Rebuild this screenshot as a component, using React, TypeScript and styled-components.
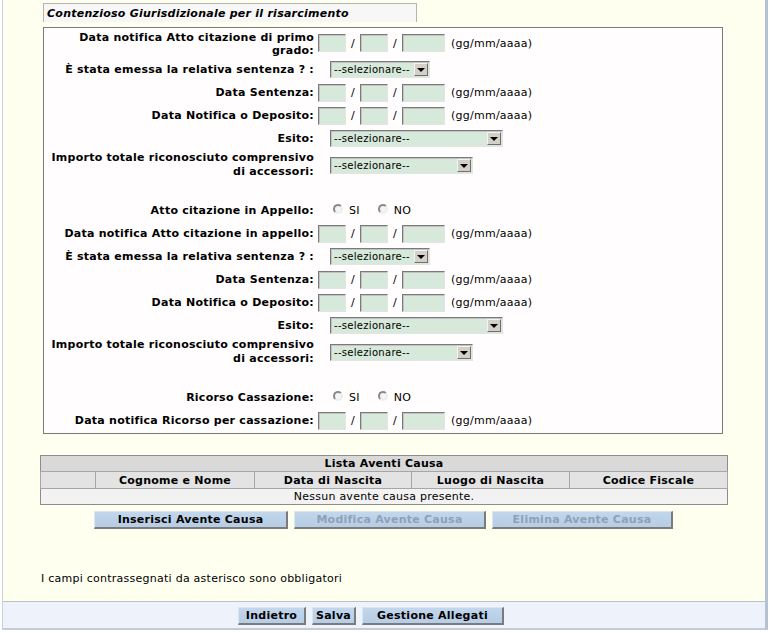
import React from 'react';
import styled, { createGlobalStyle } from 'styled-components';

const GlobalStyle = createGlobalStyle`
  html, body {
    margin: 0;
    padding: 0;
    background: #ffffff;
  }

  body {
    font-family: 'DejaVu Sans', Verdana, sans-serif;
    font-size: 11px;
    letter-spacing: 0.25px;
    color: #000;
  }
`;

const colors = {
  page: '#fffff0',
  box: '#fffdfd',
  field: '#d6e9da',
  button: '#b6cde5',
  bar: '#eef3fb'
};

const Page = styled.div`
  display: flex;
  flex-direction: column;
  margin-left: 2px;
  width: 762px;
  height: 628px;
  border-left: 1px solid #c9d3dd;
  border-right: 3px solid #b3c3d3;
  border-bottom: 2px solid #c3ccd5;
  background-color: ${colors.page};
`;

const Main = styled.div`
  flex: 1;
  padding-top: 3px;
`;

const Section = styled.div`
  margin-left: 40px;
  width: 680px;
`;

const Tab = styled.div`
  box-sizing: border-box;
  width: 374px;
  height: 19px;
  padding-left: 3px;
  border: 1px solid #b4b4b4;
  border-bottom: 0;
  background-color: #f7f7f7;
  font-weight: bold;
  font-style: italic;
  line-height: 19px;
`;

const Box = styled.div`
  box-sizing: border-box;
  margin-top: 5px;
  padding-bottom: 1px;
  border: 1px solid #7a7a7a;
  background-color: ${colors.box};
`;

const Row = styled.div<{ $blank?: boolean }>`
  display: grid;
  grid-template-columns: 270px 1fr;
  align-items: center;
  min-height: ${p => (p.$blank ? '19px' : '23px')};
`;

const Label = styled.div<{ $low?: boolean }>`
  padding: ${p => (p.$low ? '3px 0 1px 3px' : '1px 0 1px 3px')};
  text-align: right;
  font-weight: bold;
  line-height: ${p => (p.$low ? '13px' : '14px')};
`;

const Field = styled.div`
  display: flex;
  align-items: center;
  padding-left: 4px;
`;

const Input = styled.div<{ $w: number }>`
  box-sizing: border-box;
  width: ${p => p.$w}px;
  height: 18px;
  background-color: ${colors.field};
  border: 1px solid;
  border-color: #7a7a7a #e4e4e4 #e4e4e4 #7a7a7a;
  box-shadow: inset 1px 1px 0 #c2c2c2;
`;

const Slash = styled.span`
  width: 14px;
  text-align: center;
`;

const Hint = styled.span`
  margin-left: 6px;
`;

const Select = styled.div<{ $w: number }>`
  position: relative;
  box-sizing: border-box;
  width: ${p => p.$w}px;
  height: 17px;
  margin-left: 12px;
  padding-left: 3px;
  background-color: ${colors.field};
  border: 1px solid;
  border-color: #7a7a7a #e4e4e4 #e4e4e4 #7a7a7a;
  box-shadow: inset 1px 1px 0 #c2c2c2;
  font-size: 10px;
  letter-spacing: 0.3px;
  line-height: 15px;
`;

const Arrow = styled.span`
  position: absolute;
  top: 1px;
  right: 1px;
  box-sizing: border-box;
  width: 14px;
  height: 13px;
  background-color: #d4d0c8;
  border: 1px solid;
  border-color: #f4f4f4 #6e6e6e #6e6e6e #f4f4f4;

  &::after {
    content: '';
    position: absolute;
    left: 2px;
    top: 4px;
    border-left: 4px solid transparent;
    border-right: 4px solid transparent;
    border-top: 4px solid #000;
  }
`;

const Radio = styled.span<{ $first?: boolean }>`
  box-sizing: border-box;
  width: 10px;
  height: 10px;
  margin: -4px 6px 0 ${p => (p.$first ? '15px' : '18px')};
  border-radius: 50%;
  border: 2px solid;
  border-color: #8a8a8a #eeeeee #eeeeee #8a8a8a;
  background-color: #f4f4f4;
`;

const ListTable = styled.table`
  margin: 21px 0 0 37px;
  width: 687px;
  border-collapse: collapse;
  border: 1px solid #8c8c8c;
  table-layout: fixed;
`;

const Col = styled.col<{ $w: number }>`
  width: ${p => p.$w}px;
`;

const TitleCell = styled.th`
  height: 15px;
  padding: 0;
  background-color: #d9d9d9;
  border-bottom: 1px solid #a6a6a6;
  font-size: 11px;
  line-height: 15px;
`;

const HeadCell = styled.th`
  height: 16px;
  padding: 0;
  background-color: #e3e3e3;
  border: 1px solid #a6a6a6;
  font-size: 11px;
  line-height: 15px;
`;

const EmptyCell = styled.td`
  height: 15px;
  padding: 0;
  background-color: #f2f2f2;
  border-top: 1px solid #a6a6a6;
  text-align: center;
  line-height: 15px;
`;

const ButtonRow = styled.div<{ $start?: number }>`
  display: flex;
  gap: 6px;
  ${p => (p.$start ? `padding-left: ${p.$start}px;` : 'justify-content: center;')}
`;

const ListButtons = styled(ButtonRow)`
  margin: 6px 0 0 37px;
  width: 687px;
`;

const Button = styled.button<{ $w: number }>`
  box-sizing: border-box;
  width: ${p => p.$w}px;
  height: 18px;
  padding: 0;
  background: linear-gradient(#c2d6ec, ${colors.button});
  border: 1px solid #dbe5ef;
  border-right: 2px solid #7b7b7b;
  border-bottom: 2px solid #7b7b7b;
  font-family: 'DejaVu Sans', Verdana, sans-serif;
  font-size: 11px;
  font-weight: bold;
  letter-spacing: 0.25px;
  line-height: 14px;
  color: #000;

  &:disabled {
    color: #8fa1b5;
  }
`;

const Note = styled.p`
  margin: 43px 0 0 38px;
  line-height: 14px;
`;

const Bar = styled.div`
  height: 27px;
  padding-top: 5px;
  box-sizing: border-box;
  border-top: 1px solid #b9c1c9;
  background-color: ${colors.bar};
`;

const DateField = () => (
  <Field>
    <Input $w={28} />
    <Slash>/</Slash>
    <Input $w={28} />
    <Slash>/</Slash>
    <Input $w={43} />
    <Hint>(gg/mm/aaaa)</Hint>
  </Field>
);

const Choice = ({ w }: { w: number }) => (
  <Field>
    <Select $w={w}>
      --selezionare--
      <Arrow />
    </Select>
  </Field>
);

const YesNo = () => (
  <Field>
    <Radio $first />
    <span>SI</span>
    <Radio />
    <span>NO</span>
  </Field>
);

const Outcome = () => (
  <>
    <Row>
      <Label>È stata emessa la relativa sentenza ? :</Label>
      <Choice w={100} />
    </Row>
    <Row>
      <Label>Data Sentenza:</Label>
      <DateField />
    </Row>
    <Row>
      <Label>Data Notifica o Deposito:</Label>
      <DateField />
    </Row>
    <Row>
      <Label>Esito:</Label>
      <Choice w={173} />
    </Row>
    <Row>
      <Label>
        Importo totale riconosciuto comprensivo
        <br />
        di accessori:
      </Label>
      <Choice w={143} />
    </Row>
  </>
);

export default function App() {
  return (
    <>
      <GlobalStyle />
      <Page>
        <Main>
          <Section>
            <Tab>Contenzioso Giurisdizionale per il risarcimento</Tab>
            <Box>
              <Row>
                <Label $low>
                  Data notifica Atto citazione di primo
                  <br />
                  grado:
                </Label>
                <DateField />
              </Row>
              <Outcome />
              <Row $blank />
              <Row>
                <Label>Atto citazione in Appello:</Label>
                <YesNo />
              </Row>
              <Row>
                <Label>Data notifica Atto citazione in appello:</Label>
                <DateField />
              </Row>
              <Outcome />
              <Row $blank />
              <Row>
                <Label>Ricorso Cassazione:</Label>
                <YesNo />
              </Row>
              <Row>
                <Label>Data notifica Ricorso per cassazione:</Label>
                <DateField />
              </Row>
            </Box>
          </Section>

          <ListTable>
            <colgroup>
              <Col $w={55} />
              <Col $w={159} />
              <Col $w={157} />
              <Col $w={158} />
              <Col $w={158} />
            </colgroup>
            <thead>
              <tr>
                <TitleCell colSpan={5}>Lista Aventi Causa</TitleCell>
              </tr>
              <tr>
                <HeadCell />
                <HeadCell>Cognome e Nome</HeadCell>
                <HeadCell>Data di Nascita</HeadCell>
                <HeadCell>Luogo di Nascita</HeadCell>
                <HeadCell>Codice Fiscale</HeadCell>
              </tr>
            </thead>
            <tbody>
              <tr>
                <EmptyCell colSpan={5}>Nessun avente causa presente.</EmptyCell>
              </tr>
            </tbody>
          </ListTable>

          <ListButtons>
            <Button $w={194}>Inserisci Avente Causa</Button>
            <Button $w={192} disabled>Modifica Avente Causa</Button>
            <Button $w={181} disabled>Elimina Avente Causa</Button>
          </ListButtons>

          <Note>I campi contrassegnati da asterisco sono obbligatori</Note>
        </Main>

        <Bar>
          <ButtonRow $start={235}>
            <Button $w={68}>Indietro</Button>
            <Button $w={44}>Salva</Button>
            <Button $w={142}>Gestione Allegati</Button>
          </ButtonRow>
        </Bar>
      </Page>
    </>
  );
}
